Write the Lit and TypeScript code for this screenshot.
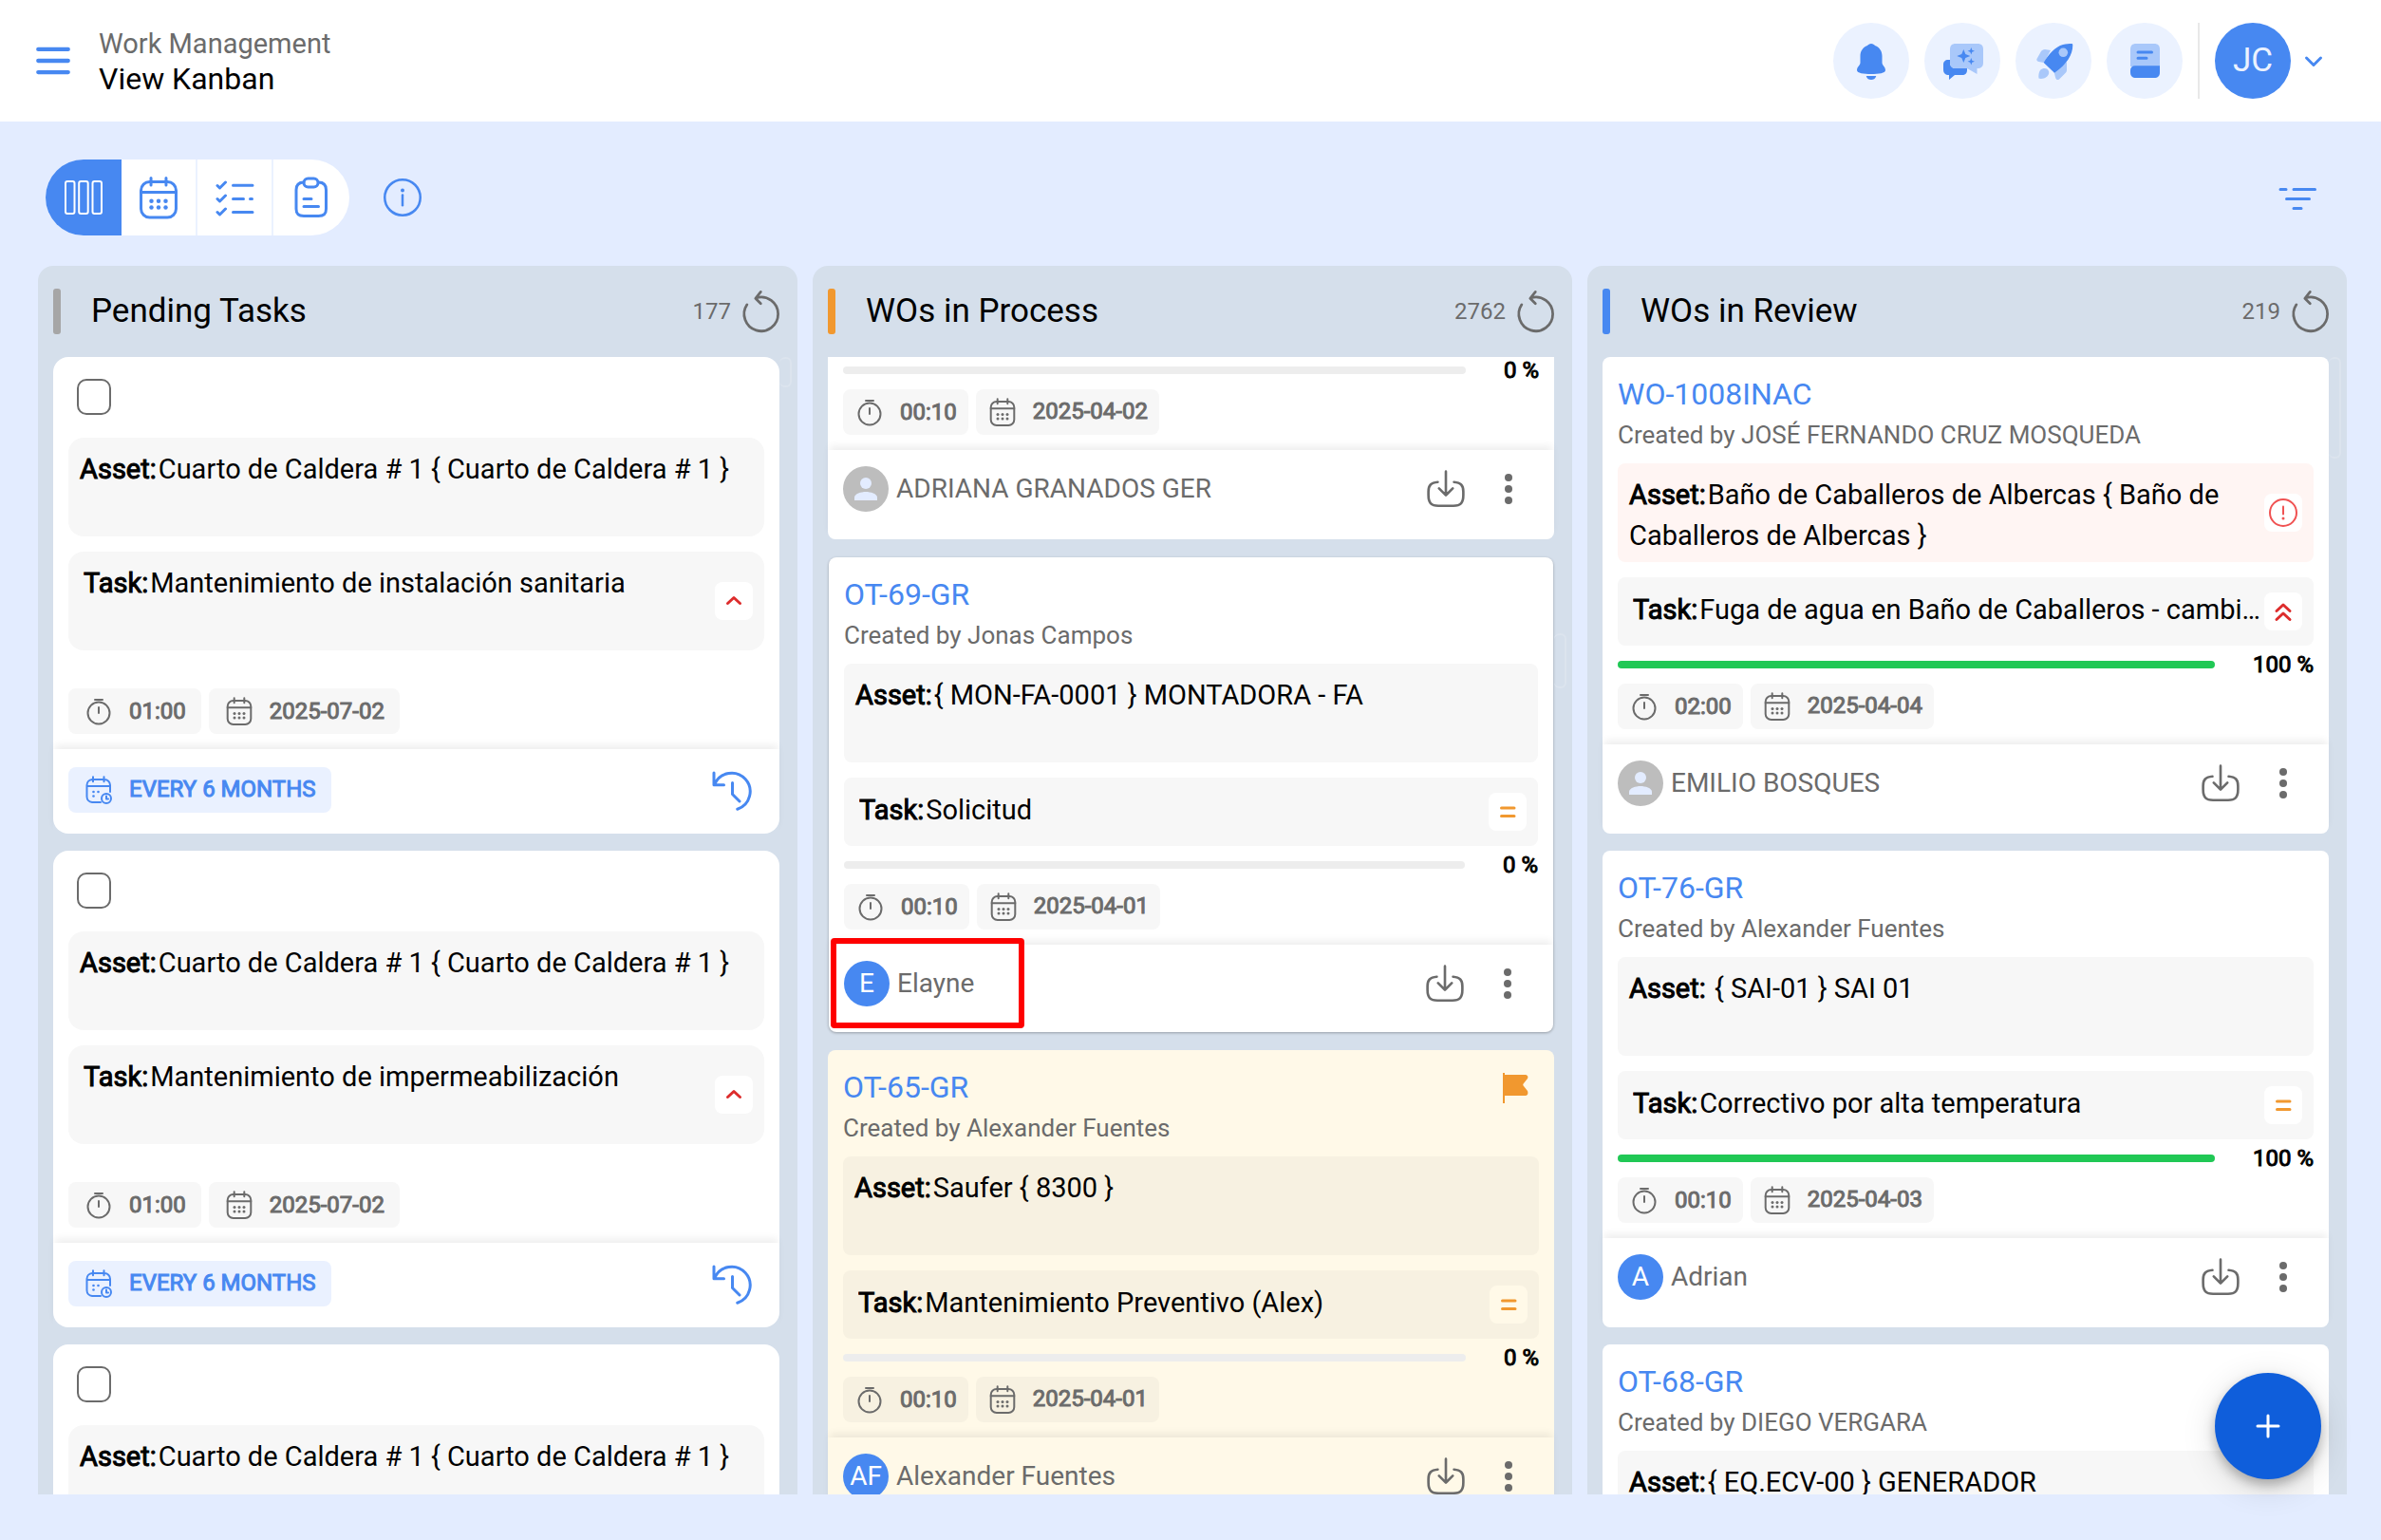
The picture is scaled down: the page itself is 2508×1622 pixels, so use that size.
import { LitElement, html, svg, css, nothing } from "lit";
import { customElement, property } from "lit/decorators.js";

const strokeIcons: Record<string, unknown> = {
  calendar: svg`<rect x="3.700" y="5" width="24.600" height="25" rx="6"/><path d="M3.700 12.300h24.600M10.700 2.300v5M21.300 2.300v5"/><g fill="currentColor" stroke="none"><circle cx="11" cy="18.500" r="1.500"/><circle cx="16" cy="18.500" r="1.500"/><circle cx="21" cy="18.500" r="1.500"/><circle cx="11" cy="23" r="1.500"/><circle cx="16" cy="23" r="1.500"/><circle cx="21" cy="23" r="1.500"/></g>`,
  timer: svg`<circle cx="16" cy="18" r="11.500"/><path d="M16 12v6M12 4h8"/>`,
  repeat: svg`<path d="M18 29H9a6 6 0 0 1-5.500-6V11A6 6 0 0 1 9 5h13a6 6 0 0 1 6 6v7M3.500 12h24.500M10 2.300v5M21.500 2.300v5"/><circle cx="24" cy="25" r="5"/><path d="M24 22.500v3h2"/><g fill="currentColor" stroke="none"><circle cx="10.500" cy="18" r="1.300"/><circle cx="15.500" cy="18" r="1.300"/><circle cx="10.500" cy="22.500" r="1.300"/></g>`,
  history: svg`<path d="M2 4v8.500h7M2.500 12A13 13 0 1 1 18.500 29.500M15 11v8l5 5"/>`,
  download: svg`<path d="M9.500 10.500C4 11 2 13 2 18v3c0 6 2 8.500 8 8.500h12c6 0 8-2.500 8-8.500v-3c0-5-2-7-7.500-7.500M16 2v18.500M10.500 15.500 16 21l5.500-5.500"/>`,
  reload: svg`<path d="M5 10.800A13 13 0 1 0 12 5.600M15.500 1l-4 5 4 4"/>`,
  info: svg`<circle cx="16" cy="16" r="15"/><path d="M16 14v8.500"/><circle cx="16" cy="10" r="1.600" fill="currentColor" stroke="none"/>`,
  alert: svg`<circle cx="16" cy="16" r="14"/><path d="M16 9.500v8"/><circle cx="16" cy="22" r="1.500" fill="currentColor" stroke="none"/>`,
};

const icon = (name: string) =>
  html`<svg class="icon" viewBox="0 0 32 32" aria-hidden="true">${strokeIcons[name]}</svg>`;

type Card = {
  code?: string;
  author?: string;
  asset?: string;
  task?: string;
  level?: "high" | "highest" | "medium";
  alert?: boolean;
  flagged?: boolean;
  raised?: boolean;
  marked?: boolean;
  progress?: number;
  time?: string;
  date?: string;
  every?: string;
  person?: string;
  initials?: string;
};

type Column = {
  title: string;
  count: string;
  tone: string;
  thumb: string;
  cards: Card[];
};

const columns: Column[] = [
  {
    title: "Pending Tasks",
    count: "177",
    tone: "grey",
    thumb: "short",
    cards: [
      { asset: "Cuarto de Caldera # 1 { Cuarto de Caldera # 1 }", task: "Mantenimiento de instalación sanitaria", level: "high", time: "01:00", date: "2025-07-02", every: "EVERY 6 MONTHS" },
      { asset: "Cuarto de Caldera # 1 { Cuarto de Caldera # 1 }", task: "Mantenimiento de impermeabilización", level: "high", time: "01:00", date: "2025-07-02", every: "EVERY 6 MONTHS" },
      { asset: "Cuarto de Caldera # 1 { Cuarto de Caldera # 1 }" },
    ],
  },
  {
    title: "WOs in Process",
    count: "2762",
    tone: "orange",
    thumb: "middle",
    cards: [
      { progress: 0, time: "00:10", date: "2025-04-02", person: "ADRIANA GRANADOS GER" },
      { code: "OT-69-GR", author: "Jonas Campos", asset: "{ MON-FA-0001 } MONTADORA - FA", task: "Solicitud", level: "medium", raised: true, marked: true, progress: 0, time: "00:10", date: "2025-04-01", person: "Elayne", initials: "E" },
      { code: "OT-65-GR", author: "Alexander Fuentes", asset: "Saufer { 8300 }", task: "Mantenimiento Preventivo (Alex)", level: "medium", flagged: true, progress: 0, time: "00:10", date: "2025-04-01", person: "Alexander Fuentes", initials: "AF" },
    ],
  },
  {
    title: "WOs in Review",
    count: "219",
    tone: "blue",
    thumb: "long",
    cards: [
      { code: "WO-1008INAC", author: "JOSÉ FERNANDO CRUZ MOSQUEDA", asset: "Baño de Caballeros de Albercas { Baño de Caballeros de Albercas }", alert: true, task: "Fuga de agua en Baño de Caballeros - cambio de llave", level: "highest", progress: 100, time: "02:00", date: "2025-04-04", person: "EMILIO BOSQUES" },
      { code: "OT-76-GR", author: "Alexander Fuentes", asset: "\u00a0{ SAI-01 } SAI 01", task: "Correctivo por alta temperatura", level: "medium", progress: 100, time: "00:10", date: "2025-04-03", person: "Adrian", initials: "A" },
      { code: "OT-68-GR", author: "DIEGO VERGARA", asset: "{ EQ.ECV-00 } GENERADOR" },
    ],
  },
];

const shared = css`
  *,
  *::after {
    box-sizing: border-box;
  }
  button {
    display: grid;
    place-items: center;
    margin: 0;
    padding: 0;
    border: 0;
    background: none;
    color: inherit;
    font: inherit;
    cursor: pointer;
  }
  a {
    color: inherit;
    text-decoration: none;
  }
  .icon {
    display: block;
    flex: none;
    width: 32px;
    height: 32px;
    overflow: visible;
    fill: none;
    stroke: currentColor;
    stroke-width: 2;
    stroke-linecap: round;
    stroke-linejoin: round;
  }
`;

@customElement("task-card")
class TaskCard extends LitElement {
  @property({ attribute: false }) card!: Card;

  static styles = [
    shared,
    css`
      :host {
        display: flow-root;
        flex: none;
      }
      .card {
        display: flex;
        flex-direction: column;
        height: 502px;
        border-radius: 8px;
        background: #fff;
      }
      .pending {
        border-radius: 16px;
      }
      .clipped {
        height: auto;
        border-radius: 0 0 8px 8px;
      }
      .raised {
        height: 500px;
        margin: 1px;
        box-shadow: 0 1px 3px rgba(0, 0, 0, 0.3);
      }
      .flagged {
        background: #fff9e8;
      }
      .body {
        display: flex;
        flex-direction: column;
        padding: 0 16px 16px;
      }
      .select {
        display: flex;
        align-items: center;
        height: 85px;
        padding: 0 0 2px 9px;
      }
      .tick {
        appearance: none;
        width: 36px;
        height: 38px;
        margin: 0;
        border: 2px solid #6b6b6b;
        border-radius: 10px;
        background: #fff;
      }
      .top {
        display: flex;
        justify-content: space-between;
        height: 56px;
        padding-top: 16px;
      }
      .code {
        color: #4788f1;
        font-size: 32px;
        line-height: 46px;
      }
      .flag {
        width: 28px;
        height: 32px;
        margin: 8px 11px 0 0;
        fill: #f1982f;
      }
      .author {
        height: 56px;
        color: #6b6b6b;
        font-size: 26px;
        line-height: 52px;
      }
      .box {
        display: flex;
        align-items: center;
        min-height: 104px;
        padding: 0 12px;
        border-radius: 8px;
        background: #f7f7f7;
        font-size: 29px;
        line-height: 43px;
      }
      .pending .box {
        border-radius: 16px;
      }
      .flagged .box,
      .flagged .chip {
        background: #f7f1e1;
      }
      .flagged .badge {
        background: #fff9e8;
      }
      .box.alert {
        background: #fff5f3;
      }
      .box.task {
        margin-top: 16px;
        padding-left: 16px;
      }
      .order .box.task {
        min-height: 72px;
      }
      .text {
        flex: 1;
        min-width: 0;
        height: 92px;
        padding-top: 6px;
      }
      .order .task .text {
        height: 43px;
        margin-bottom: 4px;
        padding-top: 0;
        overflow: hidden;
        white-space: nowrap;
        text-overflow: ellipsis;
      }
      .label {
        margin-right: 2px;
        font-weight: 400;
        -webkit-text-stroke: 1px currentColor;
      }
      .badge {
        display: grid;
        flex: none;
        place-items: center;
        width: 40px;
        height: 40px;
        border-radius: 8px;
        background: #fff;
      }
      .sign {
        width: 24px;
        height: 24px;
        fill: none;
        stroke: #dd2c2c;
        stroke-width: 3;
        stroke-linecap: round;
        stroke-linejoin: round;
      }
      .sign.medium {
        stroke: #f1982f;
      }
      .warn {
        color: #f05252;
      }
      .progress {
        display: flex;
        align-items: center;
        gap: 40px;
        height: 40px;
        color: #000;
        font-size: 24px;
      }
      .clipped .progress {
        height: 34px;
        padding-bottom: 6px;
      }
      .track {
        flex: 1;
        height: 8px;
        overflow: hidden;
        border-radius: 4px;
        background: #ededed;
      }
      .fill {
        height: 100%;
        background: #20c855;
      }
      .strong {
        -webkit-text-stroke: 1px currentColor;
      }
      .chips {
        display: flex;
        gap: 8px;
      }
      .pending .chips {
        margin-top: 40px;
      }
      .chip {
        display: flex;
        align-items: center;
        gap: 16px;
        height: 48px;
        padding: 0 12px;
        border-radius: 8px;
        background: #f7f7f7;
        color: #6b6b6b;
        font-size: 24px;
        -webkit-text-stroke: 1px currentColor;
      }
      .pending .chip {
        padding: 0 16px;
      }
      .chip.every {
        background: #eaf1ff;
        color: #4788f1;
      }
      .order .date,
      .every span {
        padding-bottom: 2px;
      }
      .foot {
        position: relative;
        display: flex;
        flex: 1;
        align-items: flex-start;
        justify-content: space-between;
        padding: 17px 16px 29px;
        box-shadow: 0 -6px 8px -2px rgba(0, 0, 0, 0.07);
      }
      .pending .foot {
        padding: 19px 24px 22px 16px;
      }
      .marked::after {
        content: "";
        position: absolute;
        top: -7px;
        left: 2px;
        width: 204px;
        height: 95px;
        border: 6px solid #fe0000;
        border-radius: 4px;
        pointer-events: none;
      }
      .person {
        display: flex;
        align-items: center;
        gap: 8px;
        color: #6b6b6b;
        font-size: 28px;
        line-height: 48px;
      }
      .avatar {
        display: grid;
        flex: none;
        place-items: center;
        width: 48px;
        height: 48px;
        border-radius: 50%;
        background: #4788f1;
        color: #fff;
      }
      .avatar.empty {
        background: #bdbdbd;
      }
      .silhouette {
        width: 24px;
        height: 24px;
        fill: #e3ecff;
      }
      .actions {
        display: flex;
        gap: 28px;
        padding-right: 16px;
        color: #6b6b6b;
      }
      .action {
        width: 44px;
        height: 48px;
      }
      .action .icon {
        width: 42px;
        height: 42px;
      }
      .more {
        width: 32px;
      }
      .dots {
        width: 8px;
        height: 32px;
        fill: currentColor;
      }
      .again {
        color: #4788f1;
      }
      .again .icon {
        width: 48px;
        height: 48px;
      }
    `,
  ];

  private sign(level: string) {
    const shape =
      level === "high"
        ? svg`<path d="M5.500 14.500 12 8.500l6.500 6"/>`
        : level === "highest"
          ? svg`<path d="M5 11.500 12 5l7 6.500M5 20.500l7-6.500 7 6.500"/>`
          : svg`<path d="M5.500 8h13.500M5.500 16.500h13.500"/>`;
    return html`<span class="badge"><svg class="sign ${level}" viewBox="0 0 24 24" aria-hidden="true">${shape}</svg></span>`;
  }

  render() {
    const c = this.card;
    const pending = !c.code && !c.person;
    const clipped = !c.code && !!c.person;
    const kind = [pending ? "pending" : "order", clipped ? "clipped" : "", c.raised ? "raised" : "", c.flagged ? "flagged" : ""].join(" ");
    return html`<article class="card ${kind}">
      <div class="body">
        ${pending ? html`<div class="select"><input class="tick" type="checkbox" aria-label="Select task" /></div>` : nothing}
        ${c.code
          ? html`<div class="top">
                <a class="code" href="#">${c.code}</a>
                ${c.flagged ? html`<svg class="flag" viewBox="0 0 28 32" role="img" aria-label="Flagged"><path d="M1 0h2v2h21c3 0 4 2 3 4l-4 5c-1 1-1 2 0 3l4 5c1 3 0 5-3 5H3v8H1z"/></svg>` : nothing}
              </div>
              <div class="author">Created by ${c.author}</div>`
          : nothing}
        ${c.asset
          ? html`<div class="box ${c.alert ? "alert" : ""}">
              <div class="text"><b class="label">Asset:</b>${c.asset}</div>
              ${c.alert ? html`<span class="badge warn">${icon("alert")}</span>` : nothing}
            </div>`
          : nothing}
        ${c.task
          ? html`<div class="box task">
              <div class="text"><b class="label">Task:</b>${c.task}</div>
              ${this.sign(c.level!)}
            </div>`
          : nothing}
        ${c.progress !== undefined
          ? html`<div class="progress">
              <div class="track" role="progressbar" aria-label="Progress" aria-valuenow=${c.progress}><div class="fill" style="width:${c.progress}%"></div></div>
              <span class="strong">${c.progress} %</span>
            </div>`
          : nothing}
        ${c.time
          ? html`<div class="chips">
              <span class="chip">${icon("timer")}<span>${c.time}</span></span>
              <span class="chip">${icon("calendar")}<span class="date">${c.date}</span></span>
            </div>`
          : nothing}
      </div>
      ${c.every
        ? html`<footer class="foot">
            <span class="chip every">${icon("repeat")}<span>${c.every}</span></span>
            <button class="again" aria-label="History">${icon("history")}</button>
          </footer>`
        : nothing}
      ${c.person
        ? html`<footer class="foot ${c.marked ? "marked" : ""}">
            <div class="person">
              ${c.initials
                ? html`<span class="avatar">${c.initials}</span>`
                : html`<span class="avatar empty"><svg class="silhouette" viewBox="0 0 24 24" aria-hidden="true"><circle cx="12" cy="6" r="6"/><path d="M0 24v-3c0-4 7-6 12-6s12 2 12 6v3z"/></svg></span>`}
              <span>${c.person}</span>
            </div>
            <div class="actions">
              <button class="action" aria-label="Download">${icon("download")}</button>
              <button class="action more" aria-label="More"><svg class="dots" viewBox="0 0 8 32"><circle cx="4" cy="4" r="4"/><circle cx="4" cy="16" r="4"/><circle cx="4" cy="28" r="4"/></svg></button>
            </div>
          </footer>`
        : nothing}
    </article>`;
  }
}

@customElement("app-root")
class AppRoot extends LitElement {
  static styles = [
    shared,
    css`
      :host {
        display: flex;
        flex-direction: column;
        height: 100vh;
        overflow: hidden;
        background: #e3ecff;
        color: #000;
        font-family: Roboto, "Liberation Sans", sans-serif;
      }
      .header {
        display: flex;
        flex: none;
        align-items: center;
        height: 128px;
        padding: 0 55px 0 32px;
        background: #fff;
      }
      .menu {
        width: 48px;
        height: 48px;
        color: #4788f1;
      }
      .menu .icon {
        width: 36px;
        height: 36px;
      }
      .titles {
        flex: 1;
        padding: 2px 0 0 24px;
      }
      .section {
        color: #6b6b6b;
        font-size: 29px;
        line-height: 36px;
      }
      .page {
        margin: 0;
        font-size: 32px;
        font-weight: 400;
        line-height: 38px;
      }
      .tools {
        display: flex;
        align-items: center;
        gap: 16px;
      }
      .tool {
        width: 80px;
        height: 80px;
        border-radius: 50%;
        background: #ebf2ff;
      }
      .tool svg {
        width: 48px;
        height: 48px;
      }
      .d {
        fill: #4788f1;
      }
      .l {
        fill: #a9c8fa;
      }
      .rule {
        stroke: #4788f1;
        stroke-width: 3;
        stroke-linecap: round;
      }
      .user {
        display: flex;
        align-items: center;
        gap: 8px;
        padding-left: 16px;
        border-left: 2px solid #e8e8e8;
        color: #4788f1;
      }
      .initials {
        display: grid;
        place-items: center;
        width: 80px;
        height: 80px;
        padding-bottom: 2px;
        border-radius: 50%;
        background: #4788f1;
        color: #ebf2ff;
        font-size: 35px;
      }
      .toolbar {
        display: flex;
        flex: none;
        align-items: center;
        height: 152px;
        padding: 8px 64px 0 48px;
        color: #4788f1;
      }
      .views {
        display: flex;
        overflow: hidden;
        border-radius: 40px;
        background: #fff;
      }
      .view {
        width: 80px;
        height: 80px;
        border-right: 2px solid #ebf2ff;
      }
      .view:last-child {
        border-right: 0;
      }
      .view.on {
        border-right: 0;
        background: #4788f1;
        color: #fff;
      }
      .view .icon,
      .filter .icon {
        width: 48px;
        height: 48px;
      }
      .about {
        width: 40px;
        height: 40px;
        margin-left: 36px;
      }
      .about .icon {
        width: 40px;
        height: 40px;
      }
      .filter {
        width: 48px;
        height: 48px;
        margin-left: auto;
      }
      .board {
        display: grid;
        flex: 1;
        grid-template-columns: repeat(3, minmax(0, 1fr));
        gap: 16px;
        min-height: 0;
        padding: 0 36px 48px 40px;
      }
      .column {
        position: relative;
        display: flex;
        flex-direction: column;
        min-height: 0;
        overflow: hidden;
        border-radius: 16px 16px 0 0;
        background: #d5dfeb;
      }
      .head {
        display: flex;
        flex: none;
        align-items: center;
        height: 96px;
        padding: 0 16px;
      }
      .mark {
        width: 8px;
        height: 48px;
        border-radius: 3px;
      }
      .grey {
        background: #a6a6a6;
      }
      .orange {
        background: #f1982f;
      }
      .blue {
        background: #4788f1;
      }
      .name {
        flex: 1;
        margin: 0;
        padding: 0 0 2px 32px;
        font-size: 35px;
        font-weight: 400;
      }
      .count {
        color: #6b6b6b;
        font-size: 24px;
      }
      .reload {
        margin-left: 10px;
        color: #6b6b6b;
      }
      .reload .icon {
        width: 44px;
        height: 44px;
      }
      .list {
        display: flex;
        flex: 1;
        flex-direction: column;
        gap: 18px;
        min-height: 0;
        overflow: hidden;
        padding: 0 19px 0 16px;
      }
      .thumb {
        position: absolute;
        top: 96px;
        right: 6px;
        width: 13px;
        height: 32px;
        border: 2px solid #dce4ee;
        border-left: 0;
        border-radius: 6px;
      }
      .thumb.middle {
        top: 387px;
        height: 58px;
      }
      .thumb.long {
        height: 107px;
      }
      .add {
        position: absolute;
        right: 63px;
        bottom: 64px;
        width: 112px;
        height: 112px;
        border-radius: 50%;
        background: #0f5edb;
        box-shadow: 0 6px 12px rgba(0, 0, 0, 0.25), 0 8px 36px rgba(0, 0, 0, 0.14);
        color: #fff;
      }
    `,
  ];

  render() {
    return html`
      <header class="header">
        <button class="menu" aria-label="Menu"><svg class="icon" viewBox="0 0 32 32"><path d="M2 5.300h28M2 16h28M2 26.700h28" stroke-width="3.800"/></svg></button>
        <div class="titles">
          <div class="section">Work Management</div>
          <h1 class="page">View Kanban</h1>
        </div>
        <div class="tools">
          <button class="tool" aria-label="Notifications"><svg viewBox="0 0 48 48"><path class="d" d="M24 6c-2 0-3 1-4 2-5 2-7.500 6-7.500 11v7c0 3-3.500 4-3.500 8 0 3 7 4 15 4s15-1 15-4c0-4-3.500-5-3.500-8v-7c0-5-2.500-9-7.500-11-1-1-2-2-4-2zM18.700 40h10.600c-1 3-3 4-5.300 4s-4.300-1-5.300-4z"/></svg></button>
          <button class="tool" aria-label="Assistant"><svg viewBox="0 0 48 48"><path class="d" d="M9 23h2v3c0 4 3 6 6 6h12v2c0 3-2 5-5 5h-8l-6 5v-5c-4 0-6-2-6-6v-5c0-3 2-5 5-5z"/><path class="l" d="M17 6h23c4 0 6 2 6 6v14c0 4-2 6-6.500 6v6L29 32H17c-4 0-6-2-6-6V12c0-4 2-6 6-6z"/><path class="d" d="m25.300 12 2 5 5 2-5 2-2 5-2-5-5-2 5-2zM33.300 10l1 2.700 2.700 1-2.700 1-1 2.700-1-2.700-2.700-1 2.700-1zM33.300 21l1 2.700 2.700 1-2.700 1-1 2.700-1-2.700-2.700-1 2.700-1z"/></svg></button>
          <button class="tool" aria-label="What is new"><svg viewBox="0 0 48 48"><path class="l" d="m21 13-6-1c-2 0-3 1-4 2l-4.500 8c-.500 1 0 2.500 2 3l5.500 1zM38 25v9c0 1.500-1 2.500-2 3.500l-6 6c-2 1.500-3.500 0-4-2L24.700 36zM10 34c3-3 8-2.500 9 1s-1.500 6-5 7.500c-2 .500-4.500.500-5.500 0-.500-2.500 0-6.500 1.500-8.500z"/><path class="d" d="M25 36.700 13.700 26C18 18 26 9 34 7c3-1 7-1 9-1 1 0 1.300.500 1.300 1.500 0 10-6 20-19.300 29.200z"/><circle class="l" cx="34.300" cy="15.300" r="4.800"/></svg></button>
          <button class="tool" aria-label="Manual"><svg viewBox="0 0 48 48"><path class="l" d="M15 6h19c4 0 6 2 6 6v18H9V12c0-4 2-6 6-6z"/><path class="d" d="M14 29.300h26V36c0 4-2 6-6 6H15c-4 0-6-2-6-6v-2c0-3 2-4.700 5-4.700z"/><path class="rule" d="M17 15h14.500M17 21.300h9"/></svg></button>
          <button class="user" aria-label="Account">
            <span class="initials">JC</span>
            <svg class="icon" viewBox="0 0 32 32"><path d="m8.500 13 7.500 7.500 7.500-7.500" stroke-width="3"/></svg>
          </button>
        </div>
      </header>
      <nav class="toolbar" aria-label="Views">
        <div class="views">
          <button class="view on" aria-label="Kanban"><svg class="icon" viewBox="0 0 48 48"><rect x="5" y="7" width="9.500" height="34" rx="2"/><rect x="19.200" y="7" width="9.500" height="34" rx="2"/><rect x="33.500" y="7" width="9.500" height="34" rx="2"/></svg></button>
          <button class="view" aria-label="Calendar">${icon("calendar")}</button>
          <button class="view" aria-label="List"><svg class="icon" viewBox="0 0 48 48"><path stroke-width="3" d="m6 11.500 2.500 2.500 6-6M6 25.500 8.500 28l6-6M6 39.500 8.500 42l6-6M22.500 11.300h20.500M22.500 25.500h11M40.500 25.500h2M22.500 39.500h20.500"/></svg></button>
          <button class="view" aria-label="Reports"><svg class="icon" viewBox="0 0 48 48"><g stroke-width="3"><path d="M16 8c-5 0-8 2-8 8v20c0 5 2 7.500 8 7.500h15.500c6 0 8-2.500 8-7.500V16c0-6-3-8-8-8"/><rect x="16" y="4" width="15" height="9" rx="4.500"/><path d="M16 25.500h8M16 33.500h15.500"/></g></svg></button>
        </div>
        <button class="about" aria-label="Information">${icon("info")}</button>
        <button class="filter" aria-label="Filter"><svg class="icon" viewBox="0 0 48 48"><path stroke-width="3" d="M6 15.500h6M20 15.500h22.500M12.500 25.500h24M20 35.500h8"/></svg></button>
      </nav>
      <main class="board">
        ${columns.map(
          (col) => html`<section class="column">
            <div class="head">
              <span class="mark ${col.tone}"></span>
              <h2 class="name">${col.title}</h2>
              <span class="count">${col.count}</span>
              <button class="reload" aria-label="Reload ${col.title}">${icon("reload")}</button>
            </div>
            <div class="list">${col.cards.map((c) => html`<task-card .card=${c}></task-card>`)}</div>
            <span class="thumb ${col.thumb}"></span>
          </section>`,
        )}
      </main>
      <button class="add" aria-label="Add"><svg class="icon" viewBox="0 0 32 32"><path d="M16 5v22M5 16h22" stroke-width="3"/></svg></button>
    `;
  }
}
